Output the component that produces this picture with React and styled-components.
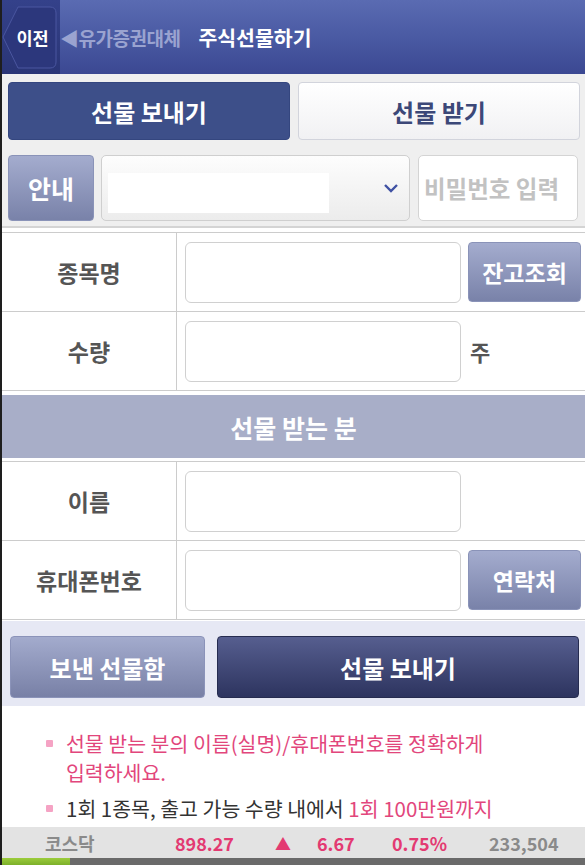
import React from 'react'
import styled, { createGlobalStyle } from 'styled-components'

const GlobalStyle = createGlobalStyle`
    html, body {
        margin: 0;
        padding: 0;
        background: #ffffff;
    }
    body {
        font-family: "Noto Sans CJK KR", "Noto Sans", sans-serif;
    }
`

const StyledPage = styled.div`
    width: 585px;
    height: 865px;
    box-sizing: border-box;
    border-left: 2px solid #1e1e1e;
    display: flex;
    flex-direction: column;
    overflow: hidden;
    background: #ffffff;
`

const StyledHeader = styled.header`
    height: 74px;
    flex-shrink: 0;
    display: flex;
    flex-direction: row;
    align-items: center;
    background: linear-gradient(to bottom, #5a6bb2 0%, #4a5aa3 50%, #3b4892 100%);
`

const StyledBackArea = styled.div`
    width: 58px;
    height: 100%;
    position: relative;
    display: flex;
    align-items: center;
    justify-content: center;
    background: linear-gradient(to bottom, #34418a, #2a3576);
`

const StyledBackShape = styled.svg`
    position: absolute;
    left: 0;
    top: 0;
`

const StyledBackLabel = styled.span`
    position: relative;
    padding-left: 3px;
    color: #ffffff;
    font-size: 17.5px;
    font-weight: 700;
`

const StyledCrumb = styled.span`
    color: #9aa3d0;
    font-size: 19px;
    font-weight: 700;
    letter-spacing: -0.5px;
`

const StyledTitle = styled.h1`
    margin: 0 0 0 18px;
    color: #ffffff;
    font-size: 20.5px;
    font-weight: 700;
`

const StyledTopPanel = styled.section`
    background: #efefef;
    padding: 8px 5px 0 6px;
    height: 154px;
    box-sizing: border-box;
    border-bottom: 2px solid #d4d4d4;
    display: flex;
    flex-direction: column;
`

const StyledTabs = styled.div`
    display: flex;
    gap: 8px;
    height: 58px;
`

const StyledTab = styled.button`
    flex: 1;
    border-radius: 4px;
    font-family: inherit;
    font-size: 24px;
    font-weight: 700;
    cursor: pointer;
    border: 1px solid ${p => (p.$active ? '#34467f' : '#d2d4dc')};
    color: ${p => (p.$active ? '#ffffff' : '#3c4878')};
    background: ${p => (p.$active ? '#3d4f89' : 'linear-gradient(to bottom, #ffffff, #f1f1f3)')};
`

const StyledAccountRow = styled.div`
    margin-top: 15px;
    display: flex;
    gap: 7px;
    height: 66px;
    padding-right: 2px;
`

const StyledSmallButton = styled.button`
    width: ${p => p.$width || '113px'};
    height: ${p => p.$height || '60px'};
    flex-shrink: 0;
    padding: 0;
    border: 1px solid #8a93b8;
    border-radius: 4px;
    background: linear-gradient(to bottom, #a4acce, #7982a9);
    color: #ffffff;
    font-family: inherit;
    font-size: ${p => p.$size || '23px'};
    font-weight: 700;
`

const StyledSelect = styled.div`
    width: 309px;
    box-sizing: border-box;
    border: 1px solid #cfcfcf;
    border-radius: 5px;
    background: linear-gradient(to bottom, #fdfdfd, #ececec);
    display: flex;
    align-items: center;
    padding: 0 10px 0 6px;
`

const StyledMasked = styled.div`
    width: 221px;
    height: 40px;
    background: #ffffff;
    margin-top: 10px;
`

const StyledChevron = styled.svg`
    margin-left: auto;
`

const StyledPassword = styled.div`
    flex: 1;
    margin-left: 1px;
    box-sizing: border-box;
    border: 1px solid #d4d4d4;
    border-radius: 5px;
    background: #ffffff;
    display: flex;
    align-items: center;
    padding-left: 5px;
    color: #c2c2c2;
    font-size: 23.5px;
    font-weight: 700;
    white-space: nowrap;
    overflow: hidden;
`

const StyledTable = styled.div`
    margin-top: ${p => p.$gap || '4px'};
    border-top: 1px solid #cccccc;
    border-bottom: 1px solid #cccccc;
`

const StyledRow = styled.div`
    display: flex;
    height: 78px;
    & + & {
        border-top: 1px solid #cccccc;
    }
`

const StyledLabel = styled.div`
    width: 174px;
    border-right: 1px solid #cccccc;
    display: flex;
    align-items: center;
    justify-content: center;
    color: #555555;
    font-size: 23px;
    font-weight: 700;
`

const StyledCell = styled.div`
    flex: 1;
    display: flex;
    align-items: center;
    padding-left: 8px;
    gap: 7px;
`

const StyledInput = styled.div`
    width: 276px;
    height: 61px;
    box-sizing: border-box;
    border: 1px solid #d0d0d0;
    border-radius: 6px;
    background: #ffffff;
`

const StyledUnit = styled.span`
    margin-left: 2px;
    color: #555555;
    font-size: 22px;
    font-weight: 700;
`

const StyledSectionTitle = styled.h2`
    margin: 4px 0 0;
    height: 63px;
    background: #a8aec8;
    color: #ffffff;
    display: flex;
    align-items: center;
    justify-content: center;
    font-size: 25px;
    font-weight: 700;
    border-bottom: 3px solid #ffffff;
`

const StyledActions = styled.div`
    margin-top: 1px;
    background: #e6e8f4;
    padding: 15px 5px 8px 8px;
    display: flex;
    gap: 12px;
`

const StyledActionButton = styled.button`
    width: ${p => (p.$primary ? '362px' : '195px')};
    height: 62px;
    border-radius: 4px;
    font-family: inherit;
    font-size: 24px;
    font-weight: 700;
    color: #ffffff;
    border: 1px solid ${p => (p.$primary ? '#262c50' : '#8b93b9')};
    background: ${p => (p.$primary
        ? 'linear-gradient(to bottom, #565e8f, #2d345f)'
        : 'linear-gradient(to bottom, #a3abcd, #7880a6)')};
`

const StyledNotes = styled.ul`
    list-style: none;
    margin: 0;
    padding: 23px 0 0 44px;
    flex: 1;
`

const StyledNote = styled.li`
    position: relative;
    padding-left: 20px;
    font-size: 20.5px;
    line-height: 29px;
    color: ${p => (p.$pink ? '#e2467c' : '#333333')};
    & + & {
        margin-top: 7px;
    }
    &::before {
        content: '';
        position: absolute;
        left: 0;
        top: 11px;
        width: 7px;
        height: 7px;
        border-radius: 1px;
        background: #f5a3c4;
    }
`

const StyledPink = styled.span`
    color: #e2467c;
`

const StyledTicker = styled.footer`
    height: 31px;
    background: #e3e3e3;
    display: flex;
    align-items: center;
    font-size: 18px;
    font-weight: 700;
    flex-shrink: 0;
`

const StyledTick = styled.span`
    box-sizing: border-box;
    width: ${p => p.$width};
    padding-left: ${p => p.$indent || '0'};
    color: ${p => (p.$up ? '#e33a72' : '#8a8a8a')};
    font-size: ${p => p.$size || '18px'};
`

const StyledProgress = styled.div`
    height: 7px;
    background: #6a6a6a;
    flex-shrink: 0;
    display: flex;
`

const StyledProgressFill = styled.div`
    width: 68px;
    background: linear-gradient(to bottom, #9ccc3c, #7cb02a);
`

const App = () => {
    return (
        <StyledPage>
            <GlobalStyle />
            <StyledHeader>
                <StyledBackArea>
                    <StyledBackShape width="58" height="74" viewBox="0 0 58 74">
                        <path
                            d="M1 37 L16 7 L48 7 Q54 7 54 13 L54 62 Q54 68 48 68 L16 68 Z"
                            fill="#2c377c"
                            stroke="#4a56a0"
                            strokeWidth="1"
                        />
                    </StyledBackShape>
                    <StyledBackLabel>이전</StyledBackLabel>
                </StyledBackArea>
                <StyledCrumb>◀유가증권대체</StyledCrumb>
                <StyledTitle>주식선물하기</StyledTitle>
            </StyledHeader>

            <StyledTopPanel>
                <StyledTabs>
                    <StyledTab $active>선물 보내기</StyledTab>
                    <StyledTab>선물 받기</StyledTab>
                </StyledTabs>
                <StyledAccountRow>
                    <StyledSmallButton $width="86px" $height="66px" $size="25px">안내</StyledSmallButton>
                    <StyledSelect>
                        <StyledMasked />
                        <StyledChevron width="16" height="10" viewBox="0 0 16 10">
                            <path d="M2 2 L8 8 L14 2" fill="none" stroke="#3f51a3" strokeWidth="2.4" />
                        </StyledChevron>
                    </StyledSelect>
                    <StyledPassword>비밀번호 입력</StyledPassword>
                </StyledAccountRow>
            </StyledTopPanel>

            <StyledTable>
                <StyledRow>
                    <StyledLabel>종목명</StyledLabel>
                    <StyledCell>
                        <StyledInput />
                        <StyledSmallButton>잔고조회</StyledSmallButton>
                    </StyledCell>
                </StyledRow>
                <StyledRow>
                    <StyledLabel>수량</StyledLabel>
                    <StyledCell>
                        <StyledInput />
                        <StyledUnit>주</StyledUnit>
                    </StyledCell>
                </StyledRow>
            </StyledTable>

            <StyledSectionTitle>선물 받는 분</StyledSectionTitle>

            <StyledTable $gap="0">
                <StyledRow>
                    <StyledLabel>이름</StyledLabel>
                    <StyledCell>
                        <StyledInput />
                    </StyledCell>
                </StyledRow>
                <StyledRow>
                    <StyledLabel>휴대폰번호</StyledLabel>
                    <StyledCell>
                        <StyledInput />
                        <StyledSmallButton>연락처</StyledSmallButton>
                    </StyledCell>
                </StyledRow>
            </StyledTable>

            <StyledActions>
                <StyledActionButton>보낸 선물함</StyledActionButton>
                <StyledActionButton $primary>선물 보내기</StyledActionButton>
            </StyledActions>

            <StyledNotes>
                <StyledNote $pink>
                    선물 받는 분의 이름(실명)/휴대폰번호를 정확하게<br />입력하세요.
                </StyledNote>
                <StyledNote>
                    1회 1종목, 출고 가능 수량 내에서 <StyledPink>1회 100만원까지</StyledPink>
                </StyledNote>
            </StyledNotes>

            <StyledTicker>
                <StyledTick $width="173px" $indent="43px">코스닥</StyledTick>
                <StyledTick $up $width="100px">898.27</StyledTick>
                <StyledTick $up $width="42px" $size="16px">▲</StyledTick>
                <StyledTick $up $width="75px">6.67</StyledTick>
                <StyledTick $up $width="97px">0.75%</StyledTick>
                <StyledTick $width="90px">233,504</StyledTick>
            </StyledTicker>
            <StyledProgress>
                <StyledProgressFill />
            </StyledProgress>
        </StyledPage>
    )
}

export default App
